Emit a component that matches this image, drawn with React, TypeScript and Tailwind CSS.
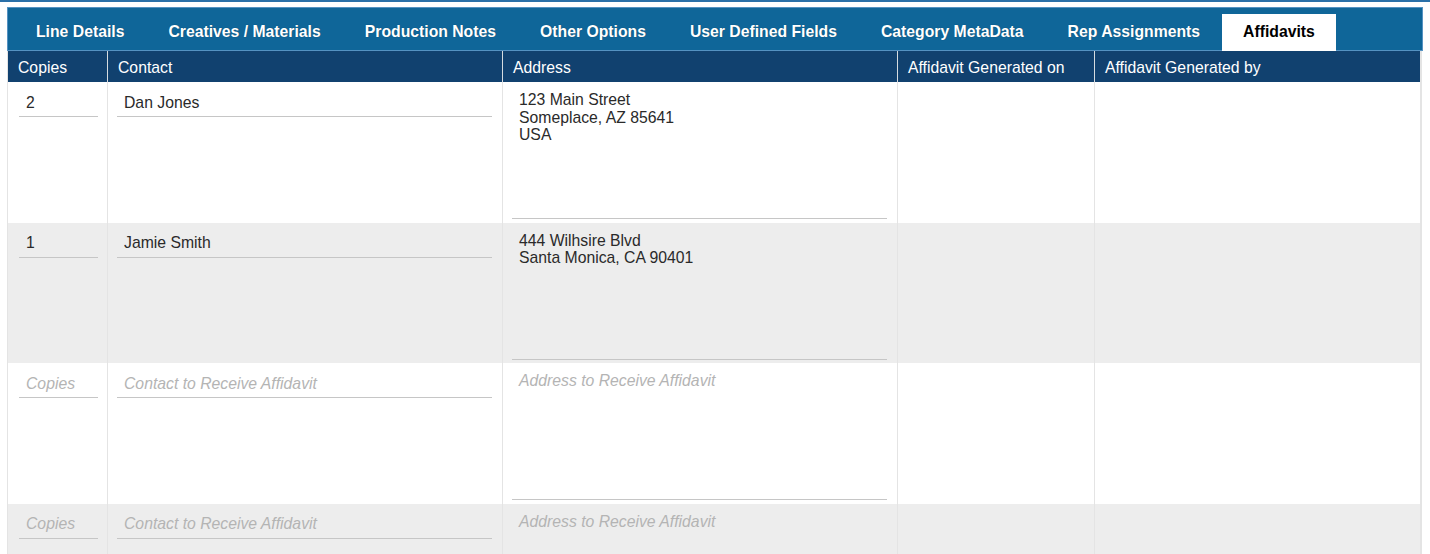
import React from "react";

const tabs = [
  "Line Details",
  "Creatives / Materials",
  "Production Notes",
  "Other Options",
  "User Defined Fields",
  "Category MetaData",
  "Rep Assignments",
  "Affidavits",
];

const columns = ["Copies", "Contact", "Address", "Affidavit Generated on", "Affidavit Generated by"];

interface Row {
  copies: string;
  contact: string;
  address: string;
}

const rows: Row[] = [
  { copies: "2", contact: "Dan Jones", address: "123 Main Street\nSomeplace, AZ 85641\nUSA" },
  { copies: "1", contact: "Jamie Smith", address: "444 Wilhsire Blvd\nSanta Monica, CA 90401" },
  { copies: "", contact: "", address: "" },
  { copies: "", contact: "", address: "" },
];

const font = { fontFamily: '"Liberation Sans", Arial, Helvetica, sans-serif' };

export default function App() {
  return (
    <div className="h-screen bg-white border-t-2 border-[#2a70a8] overflow-hidden" style={font}>
      <div className="pl-[7px] pt-[5px]">
        {/* tab strip */}
        <div className="w-[1416px] h-[44px] bg-[#0f6699] border border-[#5592c2] flex items-end pl-[6px]">
          {tabs.map((t) => {
            const active = t === "Affidavits";
            return (
              <div
                key={t}
                className={
                  active
                    ? "h-[37px] -mb-px pb-[2px] px-[21px] flex items-center bg-white text-black font-bold text-[15.75px]"
                    : "h-[37px] -mb-px pb-[2px] px-[22px] flex items-center text-white font-bold text-[15.75px] [text-shadow:0_0_1px_rgba(0,0,0,0.35)]"
                }
              >
                {t}
              </div>
            );
          })}
        </div>

        {/* table */}
        <div className="w-[1415px] border-l border-r-2 border-[#e4e4e4]">
          <div className="grid grid-cols-[100px_395px_395px_197px_1fr] h-[31px] bg-[#11416f] text-white text-[15.75px]">
            {columns.map((c, i) => (
              <div
                key={c}
                className={
                  "flex items-center pt-[2px] pl-[10px] " + (i < columns.length - 1 ? "border-r border-[#d6dbe0]" : "")
                }
              >
                {c}
              </div>
            ))}
          </div>

          {rows.map((r, idx) => {
            const bg = idx % 2 === 1 ? "bg-[#ededed]" : "bg-white";
            return (
              <div key={idx} className={"grid grid-cols-[100px_395px_395px_197px_1fr] h-[140.5px] " + bg}>
                <div className="border-r border-[#e4e4e4] pt-[5px] pl-[11px] pr-[9px]">
                  <input
                    defaultValue={r.copies}
                    placeholder="Copies"
                    className="w-full h-[30px] bg-transparent border-b border-[#c6c6c6] pl-[7px] pt-[2px] text-[15.75px] text-[#2a2a2a] outline-none placeholder:italic placeholder:text-[#b4b4b4]"
                    style={font}
                  />
                </div>
                <div className="border-r border-[#e4e4e4] pt-[5px] pl-[9px] pr-[10px]">
                  <input
                    defaultValue={r.contact}
                    placeholder="Contact to Receive Affidavit"
                    className="w-full h-[30px] bg-transparent border-b border-[#c6c6c6] pl-[7px] pt-[2px] text-[15.75px] text-[#2a2a2a] outline-none placeholder:italic placeholder:text-[#b4b4b4]"
                    style={font}
                  />
                </div>
                <div className="border-r border-[#e4e4e4] pt-[5px] pl-[9px] pr-[10px]">
                  <textarea
                    defaultValue={r.address}
                    placeholder="Address to Receive Affidavit"
                    className="block w-full h-[132px] resize-none bg-transparent border-b border-[#c6c6c6] pl-[7px] pt-[4px] text-[15.75px] leading-[17.5px] text-[#2a2a2a] outline-none placeholder:italic placeholder:text-[#b4b4b4]"
                    style={font}
                  />
                </div>
                <div className="border-r border-[#e4e4e4]" />
                <div />
              </div>
            );
          })}
        </div>
      </div>
    </div>
  );
}
